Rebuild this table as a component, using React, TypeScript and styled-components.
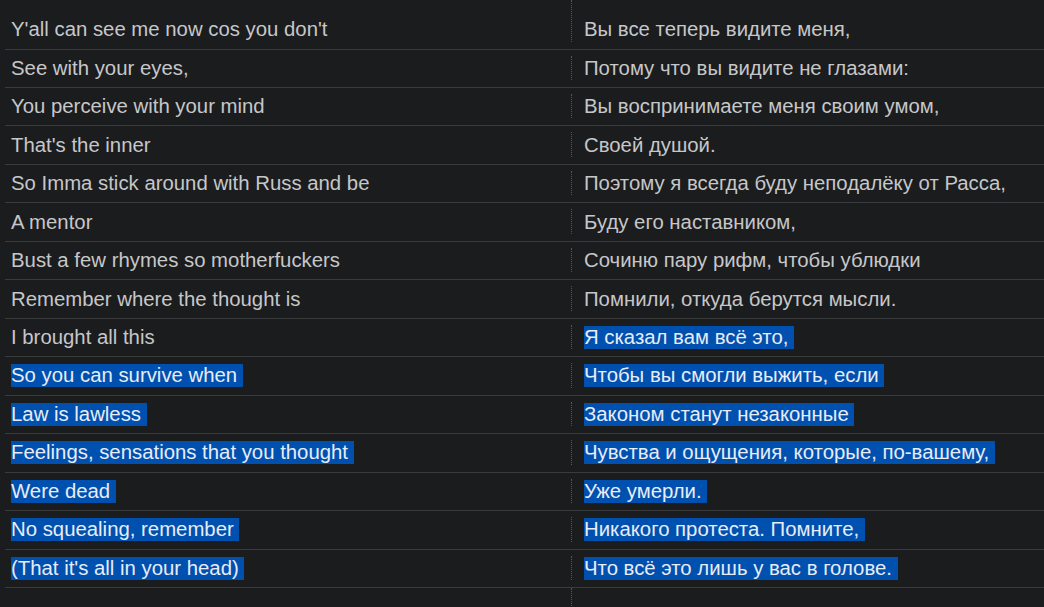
import React from "react";
import styled, { createGlobalStyle } from "styled-components";

const GlobalStyle = createGlobalStyle`
  html, body {
    margin: 0;
    padding: 0;
    background: #1b1c1e;
  }
  body {
    font-family: "Liberation Sans", Arial, "Noto Sans", sans-serif;
  }
`;

const Page = styled.div`
  height: 607px;
  overflow: hidden;
  background: #1b1c1e;
  padding-left: 5px;
  box-sizing: border-box;
`;

const LyricsTable = styled.div`
  display: flex;
  flex-direction: column;
`;

const Row = styled.div<{ lead?: boolean }>`
  display: grid;
  grid-template-columns: 566px 1px 1fr;
  align-items: stretch;
  box-sizing: border-box;
  height: ${({ lead }) => (lead ? "49.5px" : "38.48px")};
  padding-top: ${({ lead }) => (lead ? "11px" : "0")};
  border-bottom: 1px solid #3a3b3d;
`;

const Divider = styled.div<{ lead?: boolean }>`
  border-left: 1px dotted #55575a;
  margin: ${({ lead }) => (lead ? "-11px 0 7px" : "6px 0 7px")};
`;

const Cell = styled.div<{ side: "left" | "right" }>`
  display: flex;
  align-items: center;
  padding-left: ${({ side }) => (side === "left" ? "6px" : "12px")};
  font-size: 20.35px;
  color: #c6c7c9;
  white-space: pre;
`;

const Selected = styled.span`
  background: #0050b0;
  color: #e8ecf4;
`;

const Tail = styled.div`
  display: grid;
  grid-template-columns: 566px 1px 1fr;
  height: 30px;
`;

const TailDivider = styled.div`
  border-left: 1px dotted #55575a;
`;

const lines = [
  ["Y'all can see me now cos you don't", "Вы все теперь видите меня,"],
  ["See with your eyes,", "Потому что вы видите не глазами:"],
  ["You perceive with your mind", "Вы воспринимаете меня своим умом,"],
  ["That's the inner", "Своей душой."],
  ["So Imma stick around with Russ and be", "Поэтому я всегда буду неподалёку от Расса,"],
  ["A mentor", "Буду его наставником,"],
  ["Bust a few rhymes so motherfuckers", "Сочиню пару рифм, чтобы ублюдки"],
  ["Remember where the thought is", "Помнили, откуда берутся мысли."],
  ["I brought all this", "Я сказал вам всё это,"],
  ["So you can survive when", "Чтобы вы смогли выжить, если"],
  ["Law is lawless", "Законом станут незаконные"],
  ["Feelings, sensations that you thought", "Чувства и ощущения, которые, по-вашему,"],
  ["Were dead", "Уже умерли."],
  ["No squealing, remember", "Никакого протеста. Помните,"],
  ["(That it's all in your head)", "Что всё это лишь у вас в голове."],
];

// selection starts on the right side of row 9 and covers both sides from row 10
const isSelected = (row: number, side: "left" | "right") =>
  side === "left" ? row >= 9 : row >= 8;

const Line: React.FC<{ text: string; selected: boolean }> = ({ text, selected }) =>
  selected ? <Selected>{text + " "}</Selected> : <span>{text}</span>;

export default function App() {
  return (
    <Page>
      <GlobalStyle />
      <LyricsTable>
        {lines.map(([original, translation], i) => (
          <Row key={i} lead={i === 0}>
            <Cell side="left">
              <Line text={original} selected={isSelected(i, "left")} />
            </Cell>
            <Divider lead={i === 0} />
            <Cell side="right">
              <Line text={translation} selected={isSelected(i, "right")} />
            </Cell>
          </Row>
        ))}
        <Tail>
          <div />
          <TailDivider />
          <div />
        </Tail>
      </LyricsTable>
    </Page>
  );
}
